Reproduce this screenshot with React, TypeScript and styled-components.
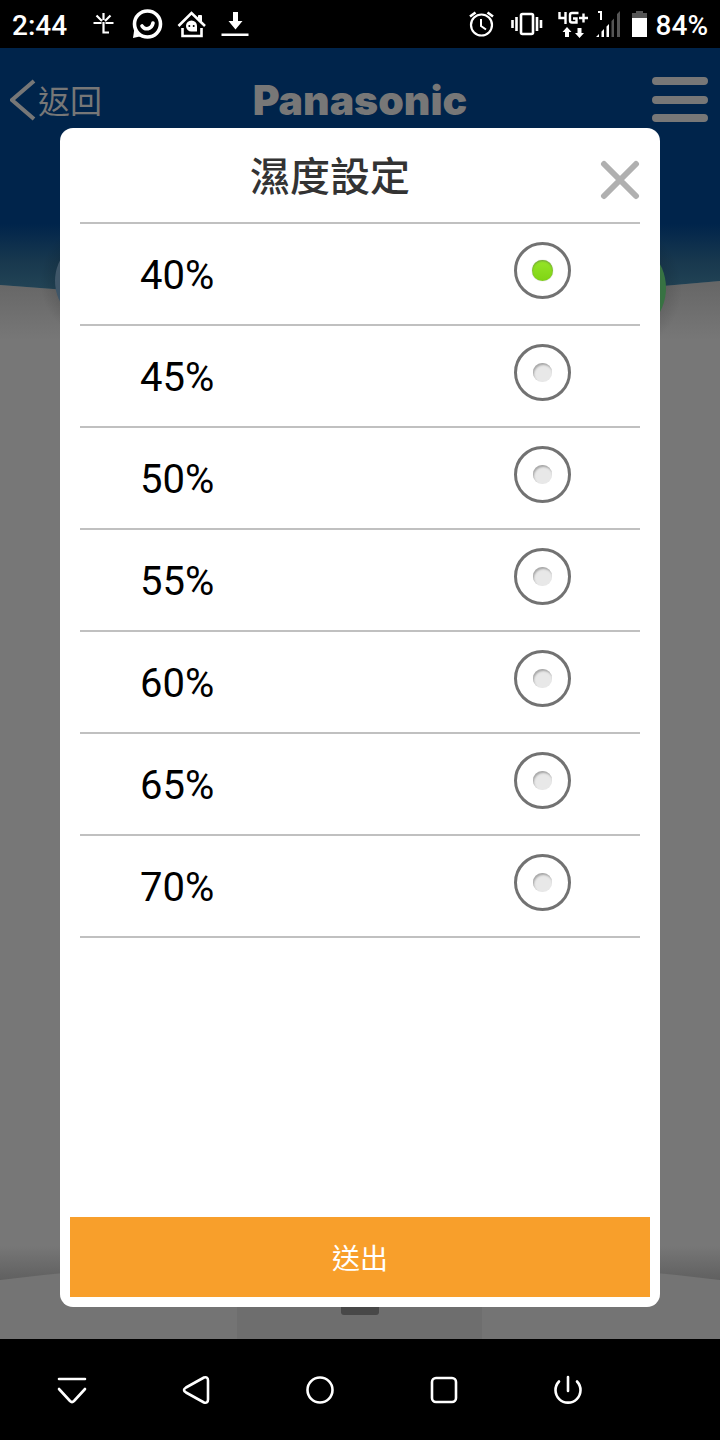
import React, { useState } from 'react';
import styled, { createGlobalStyle } from 'styled-components';

const GlobalStyle = createGlobalStyle`
  * { box-sizing: border-box; }
  body { margin: 0; background: #000; font-family: Roboto, "Noto Sans CJK TC", sans-serif; }
  button { margin: 0; padding: 0; border: 0; background: none; font: inherit; color: inherit; cursor: pointer; }
  svg { display: block; }
`;

const Screen = styled.div`
  display: flex;
  flex-direction: column;
  min-height: 100vh;
`;

const StatusBar = styled.header`
  display: flex;
  align-items: center;
  justify-content: space-between;
  height: 48px;
  padding: 0 12px;
  background: #000;
  color: #fff;
  font-size: 28px;
  font-weight: 500;
  line-height: 32px;
`;

const StatusGroup = styled.div<{ $gap: number }>`
  display: flex;
  align-items: center;
  gap: ${(p) => p.$gap}px;
`;

const Clock = styled.span`
  padding: 4px 12px 0 0;
`;

const Percent = styled.span`
  padding-top: 4px;
`;

const AppArea = styled.main`
  position: relative;
  flex: 1;
  display: flex;
  flex-direction: column;
  background: #777;
`;

const TopArt = styled.svg`
  position: absolute;
  top: 0;
  left: 0;
  width: 100%;
  height: 292px;
`;

const BottomArt = styled.svg`
  position: absolute;
  bottom: 0;
  left: 0;
  width: 100%;
  height: 139px;
`;

const AppHeader = styled.div`
  position: relative;
  display: grid;
  grid-template-columns: 1fr auto 1fr;
  align-items: center;
  height: 80px;
  padding: 24px 10px 0;
  color: #777;
`;

const BackButton = styled.button`
  display: flex;
  align-items: center;
  justify-self: start;
  gap: 2px;
  font-size: 32px;
  line-height: 40px;
`;

const BackText = styled.span`
  padding-top: 4px;
`;

const Brand = styled.div`
  font-family: Inter, "Liberation Sans", sans-serif;
  font-size: 41px;
  font-weight: 900;
  line-height: 48px;
`;

const MenuButton = styled.button`
  justify-self: end;
`;

const DialogWrap = styled.div`
  position: relative;
  flex: 1;
  display: flex;
  padding: 0 60px 32px;
`;

const Dialog = styled.form`
  flex: 1;
  display: flex;
  flex-direction: column;
  padding: 0 10px 10px;
  border-radius: 13px;
  background: #fff;
`;

const DialogHead = styled.div`
  display: flex;
  align-items: center;
  gap: 20px;
  height: 96px;
  margin: 0 10px;
  border-bottom: 2px solid #c0c0c0;
`;

const Title = styled.h1`
  flex: 1;
  margin: 0;
  padding-top: 6px;
  color: #333;
  font-size: 40px;
  font-weight: 500;
  line-height: 48px;
  text-align: center;
`;

const CloseButton = styled.button`
  padding-top: 10px;
`;

const Options = styled.fieldset`
  flex: 1;
  min-width: 0;
  margin: 0 10px;
  padding: 0;
  border: 0;
`;

const Option = styled.label`
  display: flex;
  align-items: center;
  justify-content: space-between;
  height: 102px;
  padding: 0 69px 0 60px;
  border-bottom: 2px solid #c0c0c0;
  color: #000;
  font-size: 40px;
  line-height: 48px;
  cursor: pointer;
`;

const OptionText = styled.span`
  padding-top: 4px;
`;

const Radio = styled.input`
  appearance: none;
  display: grid;
  place-items: center;
  width: 57px;
  height: 57px;
  margin: 0 0 7px;
  border: 3px solid #727272;
  border-radius: 50%;
  background: #fff;
  cursor: pointer;

  &::before {
    content: "";
    width: 19px;
    height: 19px;
    border-radius: 9px;
    background: #e8e8e8;
    box-shadow: inset 1px 2px 2px #a8a8a8;
  }

  &:checked::before {
    width: 21px;
    height: 21px;
    border-radius: 50%;
    background: linear-gradient(#96e628, #80d414);
    box-shadow: inset 0 1px 2px #6f9f3c, 0 0 1px #999;
  }
`;

const SubmitButton = styled.button`
  height: 80px;
  padding-top: 6px;
  background: #f89f2b;
  color: #fff;
  font-size: 28px;
  line-height: 40px;
`;

const NavBar = styled.nav`
  display: grid;
  grid-template-columns: repeat(5, 124px);
  place-items: center;
  height: 101px;
  padding-left: 10px;
  background: #000;
`;

const NavIcon = ({ label, children }: { label: string; children: React.ReactNode }) => (
  <button type="button" aria-label={label}>
    <svg width="32" height="32" viewBox="0 0 32 32" fill="none" stroke="#fff" strokeWidth="2.6" strokeLinecap="round" strokeLinejoin="round">
      {children}
    </svg>
  </button>
);

const LEVELS = [40, 45, 50, 55, 60, 65, 70];

export default function App() {
  const [level, setLevel] = useState(40);

  return (
    <Screen>
      <GlobalStyle />
      <StatusBar>
        <StatusGroup $gap={14}>
          <Clock>2:44</Clock>
          <svg width="24" height="26" viewBox="0 0 24 26" fill="none" stroke="#fff" strokeWidth="2.2">
            <path d="M10.500 2v7M.5 12h8M12.500 12h8M3.500 4.500l5.500 5.500M17.500 4.500l-5.500 5.500M10.500 11v10.500h5.500" />
          </svg>
          <svg width="32" height="32" viewBox="0 0 32 32" fill="none" stroke="#fff" strokeWidth="3.600">
            <circle cx="16.500" cy="16" r="13" />
            <path d="M11 18c3 4.500 9.500 3.500 11-3" strokeLinecap="round" />
            <path d="M3.500 20 2 30l9-2z" fill="#fff" stroke="none" />
          </svg>
          <svg width="30" height="30" viewBox="0 0 30 30" fill="none" stroke="#fff" strokeWidth="2.600">
            <path d="M1.500 17 14.500 4l13.500 13" />
            <path d="M21.500 9V6.500h3V13" fill="#fff" strokeWidth="1" />
            <path d="M5.500 19v8h19v-8" />
            <path d="M14.500 11.500a5.500 5.500 0 1 0 0 11h5.500V17a5.500 5.500 0 0 0-5.500-5.500z" fill="#fff" stroke="none" />
            <circle cx="12.300" cy="17" r="1" fill="#000" stroke="none" />
            <circle cx="16.700" cy="17" r="1" fill="#000" stroke="none" />
          </svg>
          <svg width="30" height="28" viewBox="0 0 30 28" fill="#fff">
            <path d="M12 2h5v9h4.500L14.500 19.500 7.500 11h4.500zM.5 23.500h27V26H.5z" />
          </svg>
        </StatusGroup>
        <StatusGroup $gap={8}>
          <svg width="156" height="32" viewBox="0 0 156 32" fill="none" stroke="#fff">
            <circle cx="13.500" cy="17" r="10.500" strokeWidth="2.200" />
            <path d="M13 11v7l5 3.500" strokeWidth="2" />
            <path d="M2 8.500 7.500 4.500M25 8.500 19.500 4.500" strokeWidth="2.600" />
            <path d="M44.500 12v8M48.500 9v14M69 9v14M73 12v8" strokeWidth="2.600" />
            <rect x="53" y="6" width="12" height="20" rx="1.500" strokeWidth="2.600" />
            <path d="M91.500 4v6h7M97.500 4v12M110.500 5H104q-2 0-2 2v5.500q0 2 2 2h4.500V10.500H105M111 10h9M115.500 5.500v9" strokeWidth="2.400" />
            <path d="M99 19l4.500 5h-2.500v5h-4v-5h-2.500zM111.500 30l-4.500-5h2.500v-5h4v5h2.500z" fill="#fff" stroke="none" />
            <path d="M130 4h3v8" strokeWidth="2" />
            <path d="M128 29l3-3v3zM133.500 29v-5.500l2.500-2.500v8zM138.500 29V18.500l2.500-2.500v13z" fill="#fff" stroke="none" />
            <path d="M143.500 29V13l2.500-2.500V29zM149 29V6l3-3V29z" fill="#555" stroke="none" />
          </svg>
          <svg width="16" height="28" viewBox="0 0 16 28">
            <path d="M4 1h7v2h4v6H0V3h4z" fill="#555" />
            <path d="M0 8h15v19H0z" fill="#fff" />
          </svg>
          <Percent>84%</Percent>
        </StatusGroup>
      </StatusBar>

      <AppArea>
        <TopArt viewBox="0 0 720 292" preserveAspectRatio="none" aria-hidden="true">
          <defs>
            <linearGradient id="sky" x1="0" y1="0" x2="0" y2="1">
              <stop offset="0" stopColor="#00244b" />
              <stop offset="0.700" stopColor="#00244b" />
              <stop offset="0.850" stopColor="#18384e" />
              <stop offset="1" stopColor="#264858" />
            </linearGradient>
            <linearGradient id="ground" x1="0" y1="0" x2="0" y2="1">
              <stop offset="0" stopColor="#666" />
              <stop offset="1" stopColor="#777" />
            </linearGradient>
            <radialGradient id="glow">
              <stop offset="0.700" stopColor="#000" stopOpacity="0.120" />
              <stop offset="1" stopColor="#000" stopOpacity="0" />
            </radialGradient>
          </defs>
          <path d="M0 237Q360 267 720 233V292H0z" fill="url(#ground)" />
          <path d="M0 0H720V233Q360 267 0 237z" fill="url(#sky)" />
          <circle cx="100" cy="233" r="60" fill="url(#glow)" />
          <circle cx="615" cy="240" r="67" fill="url(#glow)" />
          <circle cx="100" cy="233" r="45" fill="#3f5668" />
          <circle cx="615" cy="240" r="51" fill="#377242" />
        </TopArt>
        <BottomArt viewBox="0 0 720 139" preserveAspectRatio="none" aria-hidden="true">
          <defs>
            <linearGradient id="shade" x1="0" y1="0" x2="0" y2="1">
              <stop offset="0" stopColor="#777" />
              <stop offset="1" stopColor="#606060" />
            </linearGradient>
          </defs>
          <path d="M0 46H720V80H0z" fill="url(#shade)" />
          <path d="M0 80Q360 36 720 80V139H0z" fill="#747474" />
          <path d="M237 90H482V139H237z" fill="#6e6e6e" />
          <rect x="341" y="100" width="38" height="15" rx="3" fill="#484848" />
        </BottomArt>

        <AppHeader>
          <BackButton type="button">
            <svg width="26" height="44" viewBox="0 0 26 44" fill="none" stroke="#777" strokeWidth="4">
              <path d="M24 3 2 22l22 19" />
            </svg>
            <BackText>返回</BackText>
          </BackButton>
          <Brand>Panasonic</Brand>
          <MenuButton type="button" aria-label="選單">
            <svg width="58" height="46" viewBox="0 0 58 46" stroke="#777" strokeWidth="8" strokeLinecap="round">
              <path d="M4 4h48M4 23h48M4 41h48" />
            </svg>
          </MenuButton>
        </AppHeader>

        <DialogWrap>
          <Dialog role="dialog" aria-labelledby="dialog-title" onSubmit={(e) => e.preventDefault()}>
            <DialogHead>
              <Title id="dialog-title">濕度設定</Title>
              <CloseButton type="button" aria-label="關閉">
                <svg width="40" height="40" viewBox="0 0 40 40" stroke="#b0b0b0" strokeWidth="6" strokeLinecap="round">
                  <path d="M4 4 36 36M36 4 4 36" />
                </svg>
              </CloseButton>
            </DialogHead>
            <Options aria-labelledby="dialog-title">
              {LEVELS.map((value) => (
                <Option key={value}>
                  <OptionText>{value}%</OptionText>
                  <Radio type="radio" name="humidity" value={value} checked={level === value} onChange={() => setLevel(value)} />
                </Option>
              ))}
            </Options>
            <SubmitButton type="submit">送出</SubmitButton>
          </Dialog>
        </DialogWrap>
      </AppArea>

      <NavBar>
        <NavIcon label="隱藏導覽列">
          <path d="M3 5h26M3 15l11 12q2 2 4 0L29 15" />
        </NavIcon>
        <NavIcon label="返回上一頁">
          <path d="M24 3.500 6 13.500q-4 2.500 0 5L24 28.500q4 1 4-3V6.500q0-4-4-3z" />
        </NavIcon>
        <NavIcon label="主畫面">
          <circle cx="16" cy="16" r="12.500" />
        </NavIcon>
        <NavIcon label="最近使用">
          <rect x="4" y="4" width="24" height="24" rx="4" />
        </NavIcon>
        <NavIcon label="電源">
          <path d="M16 3v14M7 7.500a12.500 12.500 0 1 0 18 0" />
        </NavIcon>
      </NavBar>
    </Screen>
  );
}
